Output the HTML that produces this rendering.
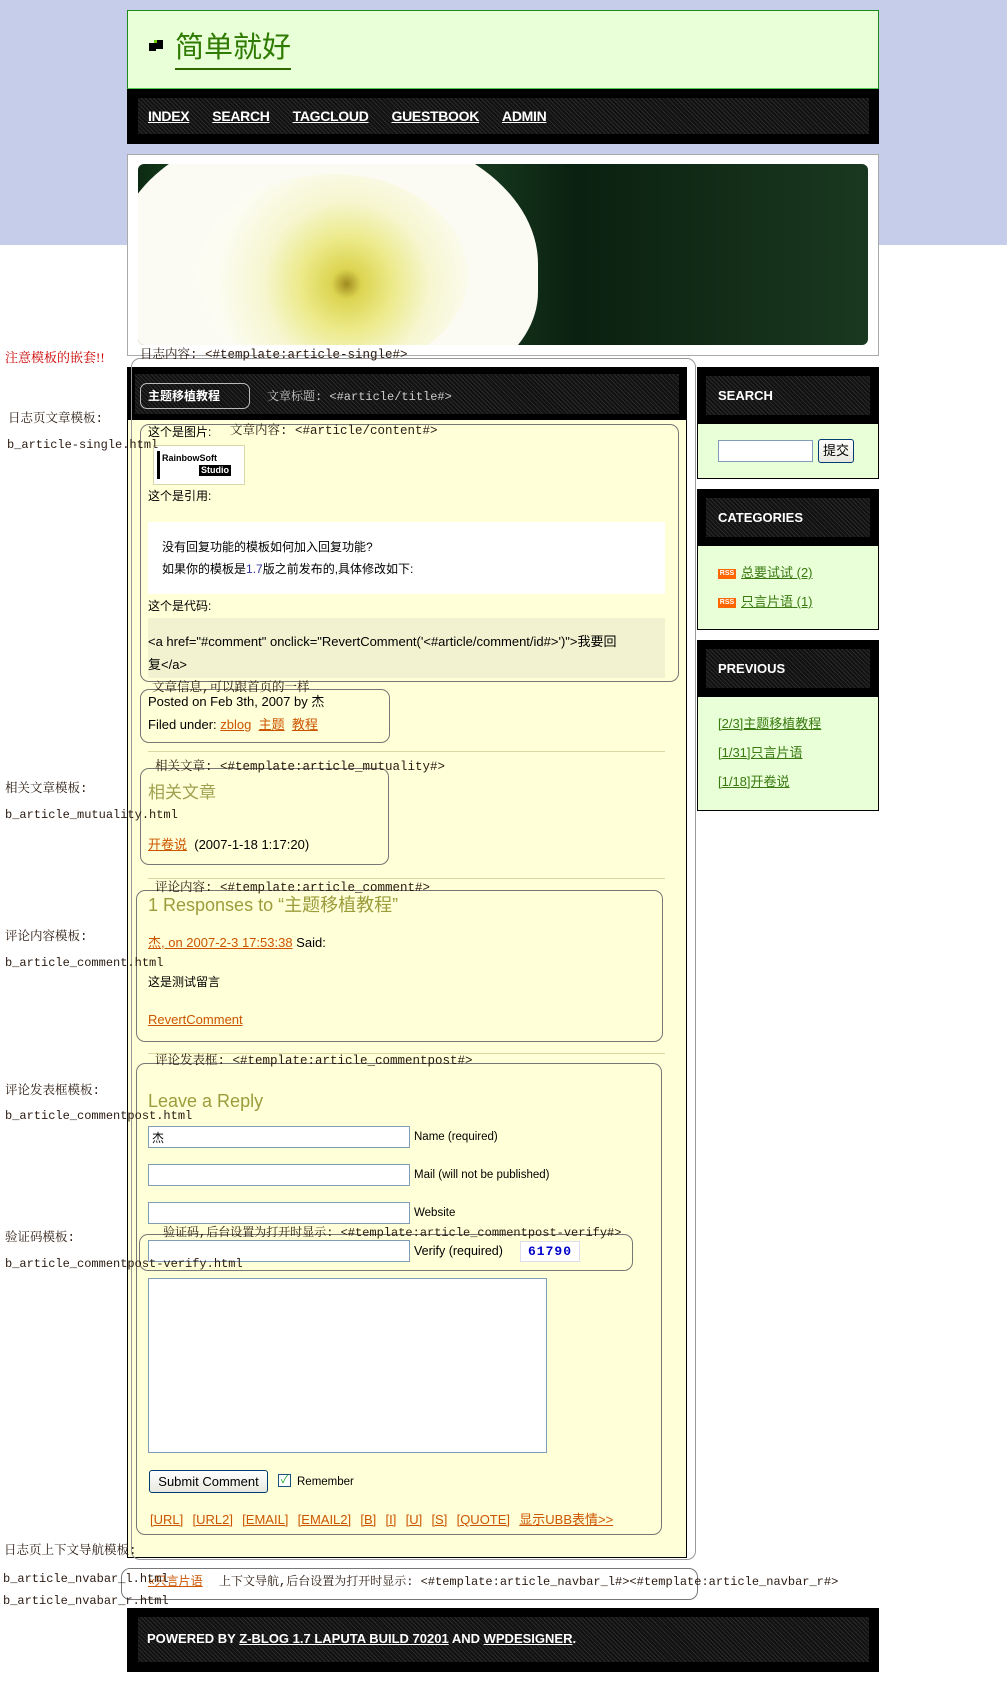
<!DOCTYPE html>
<html><head><meta charset="utf-8">
<style>
*{margin:0;padding:0;box-sizing:border-box}
body{width:1007px;height:1682px;position:relative;background:#fff;font-family:"Liberation Sans","Noto Sans CJK SC",sans-serif;font-size:13px;color:#000;overflow:hidden}
.a{position:absolute;white-space:nowrap}
.lbl{font-family:"Liberation Mono","Noto Serif CJK SC",monospace;font-size:12px;color:#2a1a10;line-height:16px}
.hatch{background:repeating-linear-gradient(45deg,#2a2a2a 0 1px,#111 1px 3px)}
.rb{position:absolute;border:1px solid #777;border-radius:9px}
.org{color:#cc5500;text-decoration:underline}
.grn{color:#3a7a10;text-decoration:underline}
.inp{position:absolute;background:#fff;border:1px solid #7f9db9}
.side{position:absolute;left:697px;width:182px;border:1px solid #000;background:#e8ffd8}
.shead{position:absolute;left:0;top:0;width:180px;background:#000}
.shead div{position:absolute;left:8px;top:8px;width:164px;height:39px;color:#fff;font-weight:bold;font-size:13px;line-height:39px;padding-left:12px}
.rss{display:inline-block;width:18px;height:10px;background:#f60;color:#fff;font-size:7px;line-height:10px;text-align:center;margin-right:5px;vertical-align:middle;font-weight:bold}
</style></head><body>
<div class="a" style="left:0;top:0;width:1007px;height:245px;background:#c5cdeb"></div>
<!-- header -->
<div class="a" style="left:127px;top:10px;width:752px;height:80px;background:#e8ffd8;border:1px solid #1a8a1a;border-bottom:2px solid #5c5"></div>
<div class="a" style="left:149px;top:43px;width:7px;height:8px;background:#000"></div>
<div class="a" style="left:155px;top:40px;width:8px;height:9px;background:#000"></div>
<div class="a" style="left:154px;top:40px;width:3px;height:3px;background:#6c0"></div>
<div class="a" style="left:175px;top:28px;font-size:29px;color:#2f7a00;line-height:40px;border-bottom:2px solid #2f6a00">简单就好</div>
<div class="a" style="left:127px;top:89px;width:752px;height:55px;background:#000"></div>
<div class="a hatch" style="left:138px;top:98px;width:731px;height:36px"></div>
<div class="a" style="left:148px;top:106px;color:#fff;font-weight:bold;font-size:14px;line-height:20px;letter-spacing:-0.3px">
<span style="text-decoration:underline;margin-right:23px">INDEX</span><span style="text-decoration:underline;margin-right:23px">SEARCH</span><span style="text-decoration:underline;margin-right:23px">TAGCLOUD</span><span style="text-decoration:underline;margin-right:23px">GUESTBOOK</span><span style="text-decoration:underline">ADMIN</span></div>
<!-- banner -->
<div class="a" style="left:127px;top:154px;width:752px;height:202px;background:#fff;border:1px solid #aaa"></div>
<div class="a" style="left:138px;top:164px;width:730px;height:181px;border-radius:6px;overflow:hidden;background:linear-gradient(90deg,#0c2a12 0%,#2f6a3a 20%,#0a2010 60%,#1a3820 100%)">
<div style="position:absolute;left:-20px;top:-40px;width:420px;height:280px;border-radius:45% 50% 40% 40%;background:#fbfbf4"></div>
<div style="position:absolute;left:60px;top:10px;width:270px;height:200px;border-radius:50%;background:radial-gradient(circle at 55% 55%,#a08a20 0,#dcd450 8%,#ecea8a 25%,#f6f6d0 45%,#fcfcf2 70%,rgba(252,252,242,0) 100%)"></div>
</div>
<!-- main column -->
<div class="a" style="left:127px;top:367px;width:560px;height:54px;background:#000"></div>
<div class="a hatch" style="left:135px;top:374px;width:544px;height:40px"></div>
<div class="a" style="left:127px;top:420px;width:560px;height:1138px;background:#ffffd8;border:1px solid #000;border-top:none"></div>
<div class="a" style="left:140px;top:383px;width:110px;height:26px;border:1px solid #bbb;border-radius:7px;color:#fff;font-weight:bold;font-size:12px;line-height:24px;padding-left:7px">主题移植教程</div>
<div class="a lbl" style="left:267px;top:389px;color:#ccc">文章标题: &lt;#article/title#&gt;</div>
<!-- outer nested box -->
<div class="rb" style="left:131px;top:358px;width:565px;height:1202px;border-color:#999"></div>
<div class="a lbl" style="left:140px;top:347px;font-size:12.5px">日志内容: &lt;#template:article-single#&gt;</div>
<!-- content box -->
<div class="rb" style="left:140px;top:424px;width:539px;height:258px"></div>
<div class="a" style="left:148px;top:424px;font-size:12px;line-height:16px">这个是图片:</div>
<div class="a lbl" style="left:230px;top:423px;font-size:12.5px">文章内容: &lt;#article/content#&gt;</div>
<div class="a" style="left:153px;top:445px;width:92px;height:40px;background:#fff;border:1px solid #d8d8a8"></div>
<div class="a" style="left:157px;top:451px;width:83px;height:28px;background:#fff;border-left:3px solid #000"></div>
<div class="a" style="left:162px;top:453px;font-size:9px;font-weight:bold;line-height:11px">RainbowSoft</div>
<div class="a" style="left:199px;top:465px;font-size:9px;font-weight:bold;line-height:11px;background:#000;color:#fff;padding:0 2px">Studio</div>
<div class="a" style="left:148px;top:488px;font-size:12px;line-height:16px">这个是引用:</div>
<div class="a" style="left:148px;top:522px;width:517px;height:72px;background:#fff"></div>
<div class="a" style="left:162px;top:539px;font-size:12px;line-height:16px">没有回复功能的模板如何加入回复功能?</div>
<div class="a" style="left:162px;top:561px;font-size:12px;line-height:16px">如果你的模板是<span style="color:#339">1.7</span>版之前发布的,具体修改如下:</div>
<div class="a" style="left:148px;top:598px;font-size:12px;line-height:16px">这个是代码:</div>
<div class="a" style="left:148px;top:618px;width:517px;height:60px;background:#f2f2d0"></div>
<div class="a" style="left:148px;top:634px;font-size:13px;line-height:16px">&lt;a href="#comment" onclick="RevertComment('&lt;#article/comment/id#&gt;')"&gt;我要回</div>
<div class="a" style="left:148px;top:657px;font-size:13px;line-height:16px">复&lt;/a&gt;</div>
<!-- info box -->
<div class="rb" style="left:140px;top:689px;width:250px;height:54px"></div>
<div class="a lbl" style="left:152px;top:680px;font-size:12.5px">文章信息,可以跟首页的一样</div>
<div class="a" style="left:148px;top:694px;line-height:16px">Posted on Feb 3th, 2007 by 杰</div>
<div class="a" style="left:148px;top:717px;line-height:16px">Filed under: <span class="org">zblog</span> &nbsp;<span class="org">主题</span> &nbsp;<span class="org">教程</span></div>
<div class="a" style="left:148px;top:751px;width:517px;height:1px;background:#d8d8a0"></div>
<!-- mutuality -->
<div class="rb" style="left:140px;top:768px;width:249px;height:97px"></div>
<div class="a lbl" style="left:155px;top:759px;font-size:12.5px">相关文章: &lt;#template:article_mutuality#&gt;</div>
<div class="a" style="left:148px;top:783px;font-size:17px;color:#a0a050;line-height:20px">相关文章</div>
<div class="a" style="left:148px;top:837px;line-height:16px"><span class="org">开卷说</span> &nbsp;(2007-1-18 1:17:20)</div>
<div class="a" style="left:148px;top:878px;width:517px;height:1px;background:#d8d8a0"></div>
<!-- comment -->
<div class="rb" style="left:136px;top:890px;width:527px;height:152px"></div>
<div class="a lbl" style="left:155px;top:880px;font-size:12.5px">评论内容: &lt;#template:article_comment#&gt;</div>
<div class="a" style="left:148px;top:894px;font-size:18px;color:#9c9c3c;line-height:22px">1 Responses to “主题移植教程”</div>
<div class="a" style="left:148px;top:935px;line-height:16px"><span class="org">杰, on 2007-2-3 17:53:38</span> Said:</div>
<div class="a" style="left:148px;top:974px;font-size:12px;line-height:16px">这是测试留言</div>
<div class="a" style="left:148px;top:1012px;line-height:16px"><span class="org">RevertComment</span></div>
<div class="a" style="left:148px;top:1053px;width:517px;height:1px;background:#d8d8a0"></div>
<!-- comment post -->
<div class="rb" style="left:136px;top:1063px;width:526px;height:472px"></div>
<div class="a lbl" style="left:155px;top:1053px;font-size:12.5px">评论发表框: &lt;#template:article_commentpost#&gt;</div>
<div class="a" style="left:148px;top:1090px;font-size:18px;color:#9c9c3c;line-height:22px">Leave a Reply</div>
<div class="inp" style="left:148px;top:1126px;width:262px;height:22px;font-size:12px;padding:2px 3px">杰</div>
<div class="a" style="left:414px;top:1130px;font-size:11.5px;line-height:14px">Name (required)</div>
<div class="inp" style="left:148px;top:1164px;width:262px;height:22px"></div>
<div class="a" style="left:414px;top:1168px;font-size:11.5px;line-height:14px">Mail (will not be published)</div>
<div class="inp" style="left:148px;top:1202px;width:262px;height:22px"></div>
<div class="a" style="left:414px;top:1206px;font-size:11.5px;line-height:14px">Website</div>
<div class="rb" style="left:139px;top:1234px;width:494px;height:37px"></div>
<div class="a lbl" style="left:163px;top:1225px;font-size:12px">验证码,后台设置为打开时显示: &lt;#template:article_commentpost-verify#&gt;</div>
<div class="inp" style="left:148px;top:1240px;width:262px;height:22px"></div>
<div class="a" style="left:414px;top:1244px;font-size:12.5px;line-height:15px">Verify (required)</div>
<div class="a" style="left:520px;top:1241px;width:60px;height:21px;background:#fff;border:1px solid #dde;color:#00c;font-family:'Liberation Mono',monospace;font-weight:bold;font-size:13px;line-height:19px;text-align:center;letter-spacing:1px">61790</div>
<div class="inp" style="left:148px;top:1278px;width:399px;height:175px"></div>
<div class="a" style="left:149px;top:1470px;width:119px;height:23px;border:1px solid #003c74;border-radius:3px;background:linear-gradient(#fff,#e8e8e0);font-size:13px;line-height:21px;text-align:center">Submit Comment</div>
<div class="a" style="left:278px;top:1474px;width:13px;height:13px;border:1px solid #1c5180;background:#fff;color:#2a2;font-size:11px;line-height:11px;text-align:center">✓</div>
<div class="a" style="left:297px;top:1475px;font-size:11.5px;line-height:14px">Remember</div>
<div class="a" style="left:150px;top:1512px;font-size:13px;line-height:16px;color:#cc5500;word-spacing:1px"><span class="org">[URL]</span>&nbsp; <span class="org">[URL2]</span>&nbsp; <span class="org">[EMAIL]</span>&nbsp; <span class="org">[EMAIL2]</span>&nbsp; <span class="org">[B]</span>&nbsp; <span class="org">[I]</span>&nbsp; <span class="org">[U]</span>&nbsp; <span class="org">[S]</span>&nbsp; <span class="org">[QUOTE]</span>&nbsp; <span class="org">显示UBB表情&gt;&gt;</span></div>
<!-- nav box -->
<div class="rb" style="left:121px;top:1568px;width:577px;height:32px"></div>
<div class="a" style="left:148px;top:1573px;line-height:16px;font-size:12px"><span class="org">«只言片语</span></div>
<div class="a lbl" style="left:219px;top:1574px;font-size:12px">上下文导航,后台设置为打开时显示: &lt;#template:article_navbar_l#&gt;&lt;#template:article_navbar_r#&gt;</div>
<!-- sidebar -->
<div class="side" style="top:367px;height:112px"><div class="shead" style="height:56px"><div class="hatch">SEARCH</div></div>
<div class="inp" style="left:20px;top:72px;width:95px;height:22px"></div>
<div class="a" style="left:120px;top:71px;width:36px;height:24px;border:1px solid #003c74;border-radius:3px;background:linear-gradient(#fff,#e8e8e0);font-size:13px;line-height:22px;text-align:center">提交</div></div>
<div class="side" style="top:489px;height:141px"><div class="shead" style="height:56px"><div class="hatch">CATEGORIES</div></div>
<div class="a" style="left:20px;top:75px;line-height:16px"><span class="rss">RSS</span><span class="grn">总要试试 (2)</span></div>
<div class="a" style="left:20px;top:104px;line-height:16px"><span class="rss">RSS</span><span class="grn">只言片语 (1)</span></div></div>
<div class="side" style="top:640px;height:171px"><div class="shead" style="height:56px"><div class="hatch">PREVIOUS</div></div>
<div class="a" style="left:20px;top:75px;line-height:16px"><span class="grn">[2/3]主题移植教程</span></div>
<div class="a" style="left:20px;top:104px;line-height:16px"><span class="grn">[1/31]只言片语</span></div>
<div class="a" style="left:20px;top:133px;line-height:16px"><span class="grn">[1/18]开卷说</span></div></div>
<!-- footer -->
<div class="a" style="left:127px;top:1608px;width:752px;height:64px;background:#000"></div>
<div class="a hatch" style="left:138px;top:1617px;width:731px;height:45px"></div>
<div class="a" style="left:147px;top:1631px;color:#fff;font-weight:bold;font-size:13px;line-height:16px">POWERED BY <span style="text-decoration:underline">Z-BLOG 1.7 LAPUTA BUILD 70201</span> AND <span style="text-decoration:underline">WPDESIGNER</span>.</div>
<!-- left labels (on top) -->
<div class="a" style="left:5px;top:350px;color:#c00;font-family:'Liberation Serif','Noto Serif CJK SC',serif;font-size:13px;line-height:16px">注意模板的嵌套!!</div>
<div class="a lbl" style="left:8px;top:411px;font-size:12.5px">日志页文章模板:</div>
<div class="a lbl" style="left:7px;top:437px">b_article-single.html</div>
<div class="a lbl" style="left:5px;top:781px;font-size:12.5px">相关文章模板:</div>
<div class="a lbl" style="left:5px;top:807px">b_article_mutuality.html</div>
<div class="a lbl" style="left:5px;top:929px;font-size:12.5px">评论内容模板:</div>
<div class="a lbl" style="left:5px;top:955px">b_article_comment.html</div>
<div class="a lbl" style="left:5px;top:1083px;font-size:12.5px">评论发表框模板:</div>
<div class="a lbl" style="left:5px;top:1108px">b_article_commentpost.html</div>
<div class="a lbl" style="left:5px;top:1230px;font-size:12.5px">验证码模板:</div>
<div class="a lbl" style="left:5px;top:1256px">b_article_commentpost-verify.html</div>
<div class="a lbl" style="left:4px;top:1543px;font-size:12.5px">日志页上下文导航模板:</div>
<div class="a lbl" style="left:3px;top:1571px">b_article_nvabar_l.html</div>
<div class="a lbl" style="left:3px;top:1593px">b_article_nvabar_r.html</div>
</body></html>
